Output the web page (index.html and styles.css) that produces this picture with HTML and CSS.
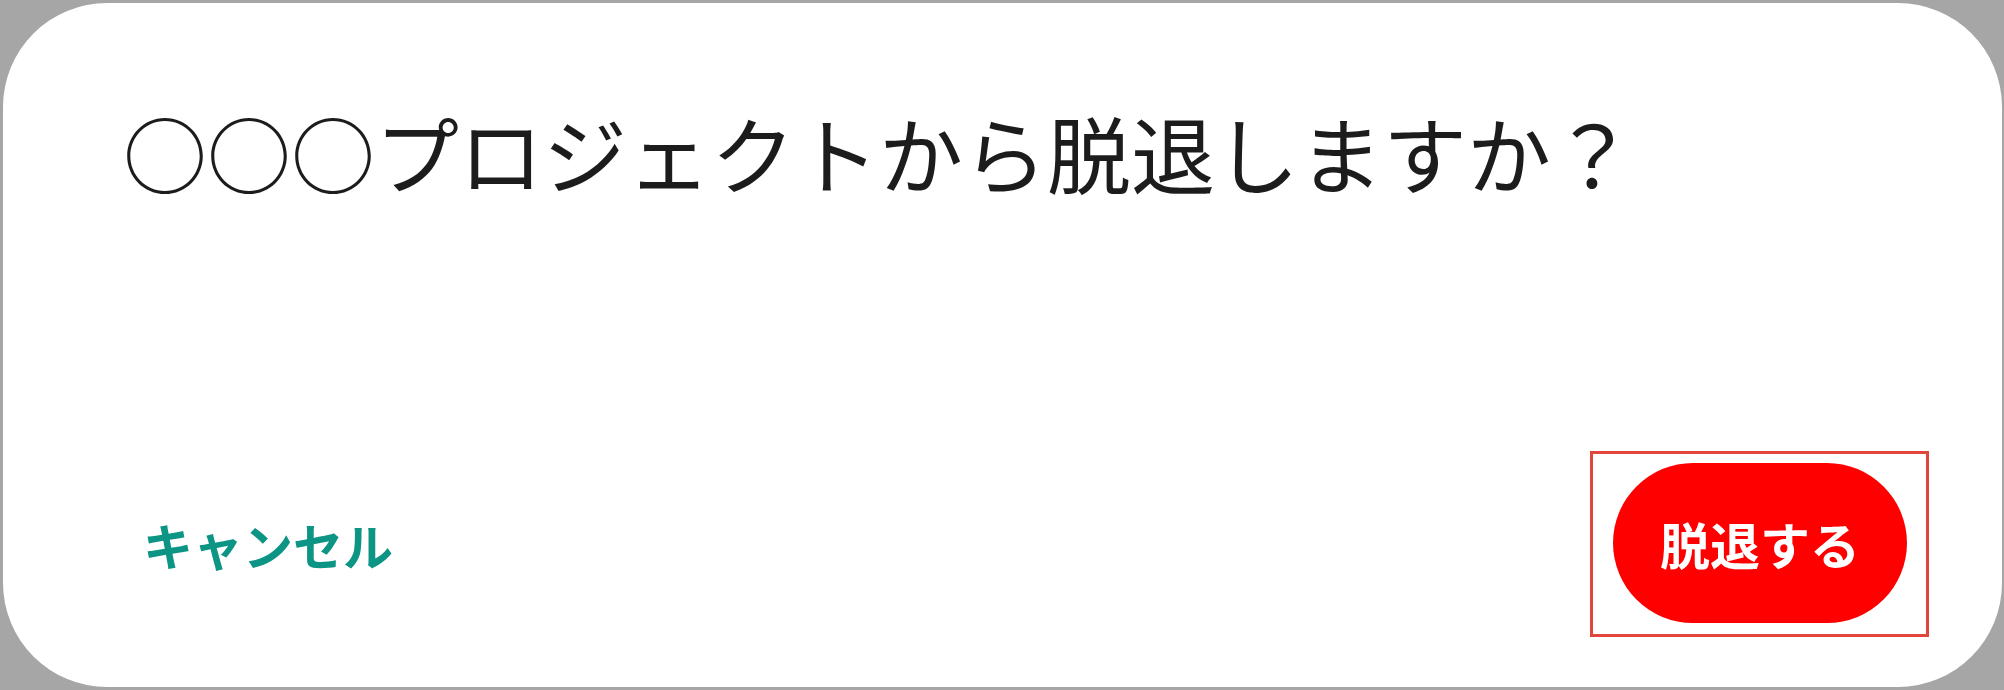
FILE: index.html
```html
<!DOCTYPE html>
<html lang="ja">
<head>
<meta charset="utf-8">
<title>脱退確認</title>
<link rel="stylesheet" href="styles.css">
</head>
<body>
<div class="dialog">
  <h1 class="title">○○○プロジェクトから脱退しますか？</h1>
  <div class="actions">
    <button class="cancel" type="button">キャンセル</button>
    <div class="highlight">
      <button class="leave" type="button">脱退する</button>
    </div>
  </div>
</div>
</body>
</html>
```
FILE: styles.css
```css
html, body {
  margin: 0;
  padding: 0;
}
body {
  width: 2004px;
  height: 690px;
  box-sizing: border-box;
  padding: 3px 2px 3px 3px;
  background: #a6a6a6;
  font-family: "Noto Sans CJK JP", "Noto Sans", sans-serif;
  overflow: hidden;
}
.dialog {
  width: 1999px;
  height: 684px;
  box-sizing: border-box;
  background: #ffffff;
  border-radius: 104px;
  display: flex;
  flex-direction: column;
  padding: 107px 73px 50px 120px;
}
.title {
  margin: 0;
  font-size: 84px;
  font-weight: 400;
  line-height: 84px;
  color: #1c1c1c;
  white-space: nowrap;
}
.actions {
  margin-top: auto;
  display: flex;
  align-items: center;
  justify-content: space-between;
}
.cancel {
  margin: 0 0 0 20px;
  padding: 0;
  border: none;
  background: none;
  font-family: inherit;
  font-size: 50px;
  font-weight: 700;
  line-height: 60px;
  color: #0c9484;
}
.highlight {
  border: 3px solid #e2453c;
  padding: 9px 19px 11px 20px;
  display: flex;
}
.leave {
  width: 294px;
  height: 160px;
  border: none;
  border-radius: 80px;
  background: #fe0000;
  color: #ffffff;
  font-family: inherit;
  font-size: 50px;
  font-weight: 700;
  padding: 0;
}
```
